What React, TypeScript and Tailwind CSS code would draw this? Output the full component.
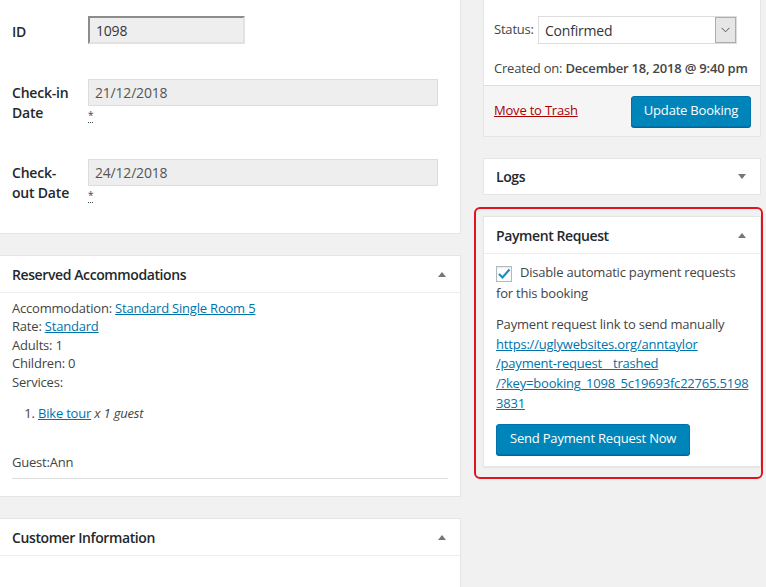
import React from "react";

const font = "font-['Open_Sans',sans-serif]";

function Arrow({ up }: { up?: boolean }) {
    return (
        <svg width="10" height="6" viewBox="0 0 10 6" className="shrink-0">
            {up ? <path d="M1 6 L5 1 L9 6 Z" fill="#72777c" /> : <path d="M1 0 L9 0 L5 5 Z" fill="#72777c" />}
        </svg>
    );
}

function PanelHeader({ title, up }: { title: string; up?: boolean }) {
    return (
        <div className="h-[37px] flex items-center justify-between pl-3 pr-[13px] border-b border-[#eee]">
            <h2 className="text-[14px] font-semibold tracking-[-0.4px] text-[#23282d]">{title}</h2>
            <Arrow up={up} />
        </div>
    );
}

export default function App() {
    const link = "text-[#0073aa] underline";

    return (
        <div className={`${font} tracking-[-0.2px] flex h-[587px] w-[766px] overflow-hidden bg-[#f1f1f1] text-[13px] text-[#444]`}>

            {/* Left column */}
            <div className="w-[461px] shrink-0 flex flex-col gap-[21px]">

                {/* Booking form */}
                <div className="bg-white border-r border-b border-[#e5e5e5] h-[234px] px-3 pt-4">
                    <div className="flex h-[28px] items-center">
                        <label className="w-[76px] text-[14px] font-semibold text-[#23282d] pt-[2px]">ID</label>
                        <div className="w-[157px] h-[28px] bg-[#eee] border-2 border-t-[#8c8c8c] border-l-[#8c8c8c] border-r-[#e2e2e2] border-b-[#e2e2e2] px-[6px] flex items-center text-[14px] text-[#32373c]">1098</div>
                    </div>

                    <div className="flex mt-[35px] h-[54px]">
                        <label className="w-[76px] pt-1 text-[14px] leading-5 font-semibold text-[#23282d]">Check-in<br />Date</label>
                        <div className="flex flex-col">
                            <div className="w-[350px] h-[27px] bg-[#eee] border border-[#ddd] px-[6px] flex items-center text-[14px] text-[#555]">21/12/2018</div>
                            <abbr className="text-[10px] leading-[14px] mt-[2px] text-[#444] no-underline border-b border-dotted border-[#444] w-fit">*</abbr>
                        </div>
                    </div>

                    <div className="flex mt-[26px] h-[54px]">
                        <label className="w-[76px] pt-1 text-[14px] leading-5 font-semibold text-[#23282d]">Check-<br />out Date</label>
                        <div className="flex flex-col">
                            <div className="w-[350px] h-[27px] bg-[#eee] border border-[#ddd] px-[6px] flex items-center text-[14px] text-[#555]">24/12/2018</div>
                            <abbr className="text-[10px] leading-[14px] mt-[2px] text-[#444] no-underline border-b border-dotted border-[#444] w-fit">*</abbr>
                        </div>
                    </div>
                </div>

                {/* Reserved Accommodations */}
                <div className="bg-white border-y border-r border-[#e5e5e5] h-[242px] shrink-0">
                    <PanelHeader title="Reserved Accommodations" up />
                    <div className="px-3 pt-[6px] leading-[18.4px]">
                        <p>Accommodation: <a className={link}>Standard Single Room 5</a></p>
                        <p>Rate: <a className={link}>Standard</a></p>
                        <p>Adults: 1</p>
                        <p>Children: 0</p>
                        <p>Services:</p>
                        <ol className="list-decimal pl-[26px] mt-[13px]">
                            <li><a className={link}>Bike tour</a> <em>x 1 guest</em></li>
                        </ol>
                        <p className="mt-[31px]">Guest:Ann</p>
                        <hr className="mt-[6px] border-[#ddd]" />
                    </div>
                </div>

                {/* Customer Information */}
                <div className="bg-white border-t border-r border-[#e5e5e5] flex-1">
                    <PanelHeader title="Customer Information" up />
                </div>
            </div>

            {/* Right column */}
            <div className="ml-[22px] w-[278px] shrink-0 flex flex-col">

                {/* Publish box */}
                <div className="bg-white border-x border-b border-[#e5e5e5] h-[137px] flex flex-col">
                    <div className="px-[10px] pt-4 h-[86px] border-b border-[#ddd]">
                        <div className="flex items-center h-[28px]">
                            <span className="w-[44px] text-[#444]">Status:</span>
                            <div className="w-[199px] h-[28px] border border-[#ddd] flex items-stretch">
                                <span className="flex-1 flex items-center px-[6px] text-[14px] text-[#32373c]">Confirmed</span>
                                <span className="w-[21px] bg-[#e6e6e6] border border-[#adadad] flex items-center justify-center">
                                    <svg width="9" height="6" viewBox="0 0 9 6"><path d="M0.5 0.8 L4.5 4.8 L8.5 0.8" fill="none" stroke="#555" strokeWidth="1" /></svg>
                                </span>
                            </div>
                        </div>
                        <p className="mt-[15px] whitespace-nowrap">Created on: <span className="font-semibold text-[#444]">December 18, 2018 @ 9:40 pm</span></p>
                    </div>
                    <div className="flex-1 bg-[#f5f5f5] pl-[10px] pr-[9px] flex items-center justify-between">
                        <a className="text-[#a00] underline">Move to Trash</a>
                        <button className="h-[31px] w-[120px] rounded-[3px] bg-[#0085ba] border border-[#0073aa] text-white text-[13px] shadow-[0_1px_0_#006799]">Update Booking</button>
                    </div>
                </div>

                {/* Logs */}
                <div className="mt-[21px] bg-white border border-[#e5e5e5] h-[37px] flex items-center justify-between pl-3 pr-[13px]">
                    <h2 className="text-[14px] font-semibold tracking-[-0.4px] text-[#23282d]">Logs</h2>
                    <Arrow />
                </div>

                {/* Payment Request (highlighted) */}
                <div className="mt-[12px] -ml-[9px] -mr-[2px] border-2 border-[#e0141e] rounded-[6px] pl-[7px] pt-[7px] pb-[10px]">
                    <div className="bg-white border border-[#e5e5e5] shadow-[0_1px_1px_rgba(0,0,0,0.04)]">
                        <PanelHeader title="Payment Request" up />
                        <div className="px-3 pt-[8px] pb-[11px]">
                            <p className="leading-[21px]">
                                <span className="inline-flex align-[-3px] w-4 h-4 border border-[#b4b9be] mr-[8px] items-center justify-center shadow-[inset_0_1px_2px_rgba(0,0,0,0.1)]">
                                    <svg width="14" height="12" viewBox="0 0 14 12"><path d="M2 6 L5.5 9.5 L12.5 1.5" fill="none" stroke="#1e8cbe" strokeWidth="2.2" /></svg>
                                </span>
                                Disable automatic payment requests for this booking
                            </p>
                            <p className="mt-[11px] leading-[19.7px]">
                                Payment request link to send manually<br />
                                <a className={`${link} whitespace-nowrap`}>https://uglywebsites.org/anntaylor<br />/payment-request__trashed<br />/?key=booking_1098_5c19693fc22765.5198<br />3831</a>
                            </p>
                            <button className="mt-[10px] h-[31px] px-[13px] rounded-[3px] bg-[#0085ba] border border-[#0073aa] text-white text-[13px] shadow-[0_1px_0_#006799]">Send Payment Request Now</button>
                        </div>
                    </div>
                </div>
            </div>
        </div>
    );
}
